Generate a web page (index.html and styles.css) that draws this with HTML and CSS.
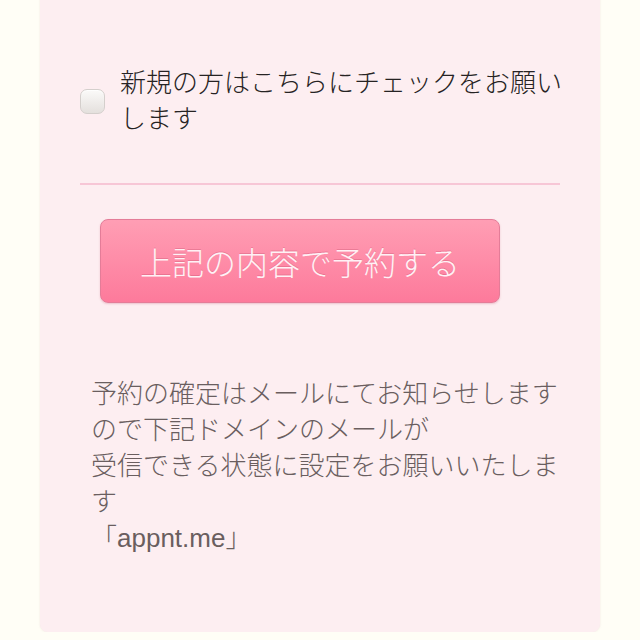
FILE: index.html
```html
<!DOCTYPE html>
<html lang="ja">
<head>
<meta charset="utf-8">
<link rel="stylesheet" href="styles.css">
</head>
<body>
<div class="card">
  <label class="check-row">
    <span class="checkbox"></span>
    <span class="check-text">新規の方はこちらにチェックをお願いします</span>
  </label>
  <hr class="divider">
  <div class="btn-wrap">
    <button class="submit">上記の内容で予約する</button>
  </div>
  <p class="note">予約の確定はメールにてお知らせしますので下記ドメインのメールが<br>受信できる状態に設定をお願いいたします<br>「appnt.me」</p>
</div>
</body>
</html>
```
FILE: styles.css
```css
html, body {
  margin: 0;
  padding: 0;
  background: #fffef6;
  font-family: "Liberation Sans", "Noto Sans CJK JP", sans-serif;
}
.card {
  margin: -20px 40px 0 40px;
  height: 652px;
  box-sizing: border-box;
  background: #fdeef1;
  border-radius: 8px;
  box-shadow: 0 0 2px rgba(200, 150, 160, 0.25);
  padding: 85px 40px 0 40px;
}
.check-row {
  display: flex;
  align-items: center;
  gap: 15px;
}
.checkbox {
  flex: none;
  width: 23px;
  height: 23px;
  border: 1px solid #d4cfcc;
  border-radius: 7px;
  background: linear-gradient(#fbfaf9, #e4e0dd);
  box-shadow: inset 0 1px 1px rgba(255,255,255,0.8);
}
.check-text {
  flex: none;
  width: 452px;
  font-size: 26px;
  font-weight: 300;
  line-height: 36px;
  color: #262323;
}
.divider {
  border: none;
  height: 2px;
  background: #f7c6d6;
  margin: 46px 0 34px 0;
}
.btn-wrap {
  padding-left: 20px;
}
.submit {
  display: block;
  width: 400px;
  height: 84px;
  border: 1px solid #e47c98;
  border-radius: 8px;
  background: linear-gradient(#ff9eb4, #fd7a9b);
  color: #fff1f5;
  font-family: inherit;
  font-size: 32px;
  font-weight: 300;
  text-shadow: 0 -1px 0 rgba(180, 60, 90, 0.25);
  box-shadow: 0 1px 2px rgba(200, 90, 120, 0.3);
}
.note {
  margin: 73px 0 0 11px;
  width: 480px;
  font-size: 26px;
  font-weight: 300;
  line-height: 36px;
  color: #6a5e5f;
}
```
